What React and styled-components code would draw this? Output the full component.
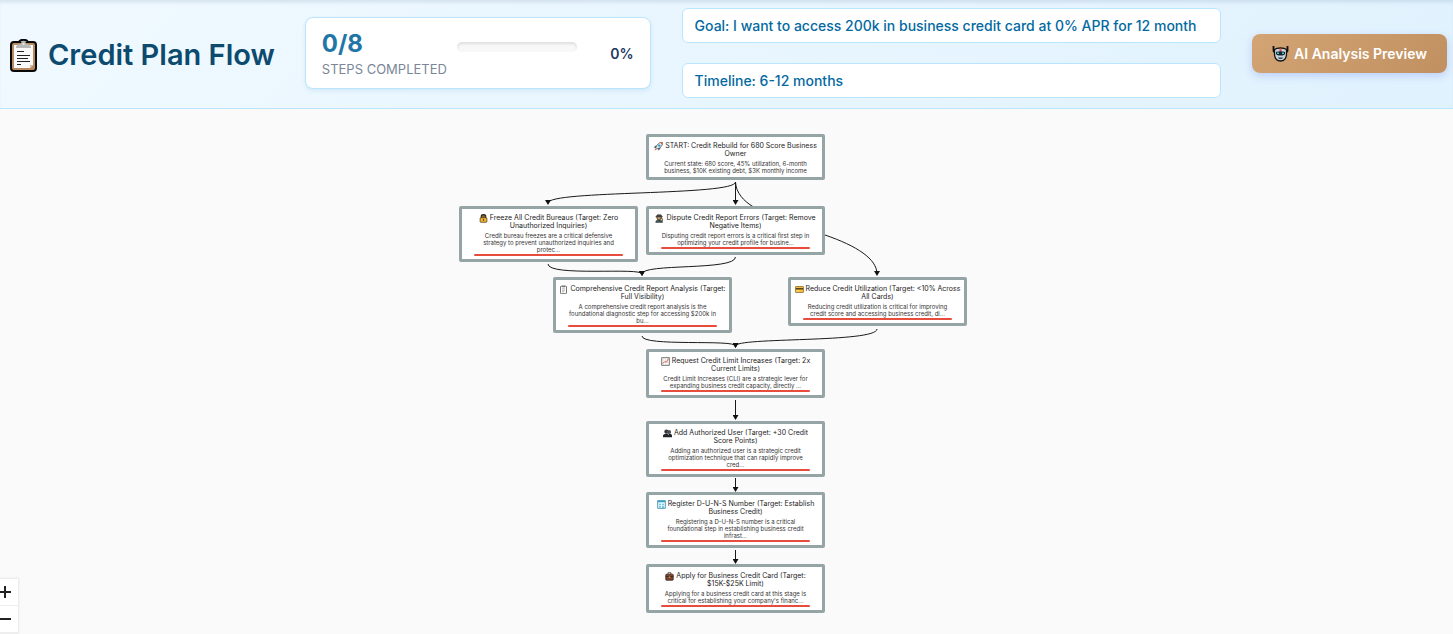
import React from 'react';
import styled, { createGlobalStyle } from 'styled-components';

const GlobalStyle = createGlobalStyle`
    * {
        box-sizing: border-box;
    }
    body {
        margin: 0;
        background: #fafafa;
        font-family: Inter, 'Liberation Sans', sans-serif;
    }
`;

const Page = styled.div`
    display: flex;
    flex-direction: column;
    min-height: 100vh;
    overflow: hidden;
`;

const Header = styled.header`
    display: flex;
    align-items: center;
    padding: 8px 6px 10px 10px;
    background: linear-gradient(135deg, #f0f9ff 0%, #e0f2fe 100%);
    border-bottom: 1px solid #bae6fd;
    box-shadow: inset 0 4px 4px -2px rgba(100, 130, 160, 0.2);
`;

const Title = styled.h1`
    display: flex;
    align-items: center;
    gap: 11px;
    margin: 0 30px 0 0;
    padding-top: 4px;
    color: #0c4a6e;
    font-size: 29px;
    font-weight: 600;
    line-height: 36px;
    white-space: nowrap;
`;

const Progress = styled.section`
    display: flex;
    align-items: center;
    width: 346px;
    height: 72px;
    padding: 0 16px;
    background: white;
    border: 1px solid #bae6fd;
    border-radius: 8px;
    box-shadow: 0 2px 4px rgba(14, 116, 180, 0.1);
`;

const Steps = styled.div`
    display: flex;
    flex-direction: column;
    gap: 2px;
    width: 135px;
`;

const Count = styled.strong`
    color: #2176a8;
    font-size: 24px;
    font-weight: 700;
    line-height: 30px;
`;

const Caption = styled.span`
    color: #7b8698;
    font-size: 13px;
    line-height: 16px;
    text-transform: uppercase;
    white-space: nowrap;
`;

const Track = styled.div`
    width: 120px;
    height: 10px;
    margin-bottom: 12px;
    overflow: hidden;
    background: #f8f8f8;
    border-radius: 5px;
    box-shadow: inset 0 2px 3px rgba(0, 0, 0, 0.1);
`;

const Fill = styled.div`
    height: 100%;
    background: #0284c7;
`;

const Percent = styled.span`
    margin-left: auto;
    color: #1e3a5f;
    font-size: 14px;
    font-weight: 600;
`;

const Facts = styled.div`
    display: flex;
    flex-direction: column;
    gap: 20px;
    width: 540px;
    margin: 0 31px;
`;

const Fact = styled.div`
    padding: 0 12px;
    background: white;
    border: 1px solid #bae6fd;
    border-radius: 6px;
    color: #0369a1;
    font-size: 14px;
    font-weight: 500;
    line-height: 33px;
    white-space: nowrap;
`;

const AnalysisButton = styled.button`
    display: flex;
    align-items: center;
    justify-content: center;
    gap: 5px;
    width: 195px;
    height: 39px;
    margin-left: auto;
    padding: 0;
    border: 0;
    border-radius: 8px;
    background: linear-gradient(135deg, #d4a574 0%, #c09060 100%);
    box-shadow: 0 3px 8px rgba(102, 126, 234, 0.3);
    color: white;
    font-family: inherit;
    font-size: 14px;
    font-weight: 600;
    white-space: nowrap;
`;

const Canvas = styled.main`
    position: relative;
    display: flex;
    flex: 1;
    justify-content: center;
`;

const Stage = styled.div`
    position: relative;
    flex: none;
    width: 559px;
    height: 520px;
`;

const Edges = styled.svg`
    position: absolute;
    inset: 0;
    width: 100%;
    height: 100%;
    fill: none;
    stroke: #1a1a1a;
`;

const Node = styled.article`
    position: absolute;
    left: ${({ $x }) => $x}px;
    top: ${({ $y }) => $y}px;
    display: flex;
    flex-direction: column;
    align-items: center;
    width: 179px;
    padding: 5px 2px 3px;
    background: white;
    border: 3px solid #95a5a6;
    border-radius: 2px;
    text-align: center;
    white-space: pre;
`;

const NodeTitle = styled.h2`
    margin: 0 0 2px;
    color: #222;
    font-size: 7px;
    font-weight: 400;
    line-height: 8px;

    svg {
        margin: 0 2px -1px 0;
        vertical-align: top;
    }
`;

const NodeText = styled.p`
    margin: 0;
    color: #333;
    font-size: 6px;
    line-height: 7px;
`;

const Rule = styled.div`
    width: 149px;
    height: 2px;
    margin-top: 1px;
    background: #e74c3c;
    border-radius: 1px;
`;

const Zoom = styled.div`
    position: absolute;
    bottom: 1px;
    left: -8px;
    display: flex;
    flex-direction: column;
    background: white;
    box-shadow: 0 0 2px 1px rgba(0, 0, 0, 0.08);
`;

const ZoomButton = styled.button`
    display: flex;
    align-items: center;
    justify-content: center;
    width: 26px;
    height: 27px;
    padding: 0;
    background: white;
    border: 0;
    border-bottom: 1px solid #eee;
`;

const ClipboardIcon = () => (
    <svg width="27" height="33" viewBox="0 0 27 33" aria-hidden="true">
        <rect x="1" y="3" width="25" height="29" rx="3" fill="#b98b62" stroke="#090909" strokeWidth="2" />
        <path d="M9 3c1-3 8-3 9 0" fill="#b9b9b9" stroke="#090909" strokeWidth="2" />
        <path d="M4 6h19v20l-3 3H4z" fill="#fafafa" />
        <path d="M20 29v-3h3" fill="#d9b996" />
        <path d="M6 9c0-3 2-4 5-4 0-4 5-4 5 0 3 0 5 1 5 4z" fill="#b9b9b9" />
        <circle cx="13.5" cy="5" r="1" fill="#eee" />
        <path d="M7 12.5h7M7 16.5h13M7 19.5h11M7 22.500h13M7 25.500h4" stroke="#222" />
    </svg>
);

const RobotIcon = () => (
    <svg width="17" height="17" viewBox="0 0 17 17" aria-hidden="true">
        <path d="M1.500 1v5L4 9M15.500 1v5L13 9" fill="none" stroke="#111" strokeWidth="1.800" />
        <path d="M2.500 4.500C5 2.500 12 2.500 14.500 4.500V10c-.5 4-3 6-6 6s-5.500-2-6-6z" fill="#c5d3da" stroke="#111" strokeWidth="1.300" />
        <path d="M7.500 3.500h2v3h-2z" fill="#e74c3c" />
        <path d="M4 7c3-1 6-1 9 0v2c-1 2-8 2-9 0z" fill="#17262e" />
        <path d="M5 7.500h2V9H5zM10 7.500h2V9h-2z" fill="#4cc5d9" />
        <path d="M6 12.500h5L10 14H7z" fill="#37474f" />
    </svg>
);

const nodeIcons = {
    rocket: (
        <>
            <path d="m3 5-2 1v2l3-1M6 8v3l2-2V7" fill="#3b88a8" stroke="#24343c" strokeWidth=".6" />
            <path d="M4 9 2.500 7.500 4 4l4-3.500h3V4L8 8z" fill="#dfe9ee" stroke="#333" strokeWidth=".8" />
            <path d="M8 .5h3.500V4zM2.500 8 .5 11.500 4 9.500z" fill="#e2523e" />
            <circle cx="7" cy="4.800" r="1.600" fill="#2c9bc4" />
        </>
    ),
    lock: (
        <>
            <path d="M3 6V3c0-3 6-3 6 0v3" fill="#8d6b22" stroke="#222" strokeWidth="1.500" />
            <rect x="1.500" y="5" width="9" height="6" rx="1" fill="#f6b932" stroke="#4b3514" />
            <circle cx="6" cy="8" r="1" fill="#222" />
        </>
    ),
    detective: (
        <>
            <path d="M1 11c0-4 9-4 9 0z" fill="#416a70" stroke="#222" />
            <circle cx="5.500" cy="5" r="3" fill="#d69b63" stroke="#222" />
            <path d="M1 4h9L8 1H3z" fill="#4e493f" stroke="#222" strokeWidth=".6" />
            <circle cx="8.500" cy="7.500" r="1.700" fill="#e6d692" stroke="#222" />
        </>
    ),
    clipboard: (
        <>
            <rect x="2" y="1.500" width="8" height="10" rx="1" fill="#fff" stroke="#444" />
            <path d="M4 1h4v2H4z" fill="#777" />
            <path d="M4 5h4M4 7h4M4 9h3" stroke="#777" strokeWidth=".7" />
        </>
    ),
    card: (
        <>
            <rect x=".5" y="2" width="11" height="8" rx="1" fill="#f4bd35" stroke="#604720" strokeWidth=".8" />
            <path d="M1 4h10v2H1z" fill="#5a421b" />
            <path d="M2 8h4" stroke="#fff0a0" />
        </>
    ),
    chart: (
        <>
            <rect x="1" y="1" width="10" height="10" fill="#fff" stroke="#444" />
            <path d="M3 1v10M6 1v10M9 1v10M1 4h10M1 7h10" stroke="#ccc" strokeWidth=".5" />
            <path d="m2 9 3-3 2 1 3-5" fill="none" stroke="#d63b34" />
        </>
    ),
    users: (
        <>
            <circle cx="4.500" cy="3.500" r="2.800" fill="#34383d" />
            <circle cx="8" cy="4" r="2.800" fill="#4a5055" />
            <path d="M0 11V9c0-3 7-4 7-1 1-3 5-2 5 1v2z" fill="#202328" />
        </>
    ),
    building: (
        <>
            <rect x="1" y="1" width="10" height="10" fill="#e9faff" stroke="#237da0" />
            <path d="M1 2h10" stroke="#329fc5" strokeWidth="2" />
            <path d="M3 5h2v2H3zM7 5h2v2H7zM3 8h2v2H3zM7 8h2v3H7z" fill="#53b6d5" />
        </>
    ),
    briefcase: (
        <>
            <path d="M4 3V1h4v2" fill="none" stroke="#35211a" />
            <rect x="1" y="3" width="10" height="8" rx="1" fill="#7c452d" stroke="#35211a" />
            <path d="M1 6h10" stroke="#35211a" />
            <path d="M5 6h2v1.500H5z" fill="#eabb52" />
        </>
    ),
};

const nodes = [
    { x: 199, y: 25, icon: 'rocket', title: 'START: Credit Rebuild for 680 Score Business\nOwner', text: 'Current state: 680 score, 45% utilization, 6-month\nbusiness, $10K existing debt, $3K monthly income', start: true },
    { x: 12, y: 97, icon: 'lock', title: 'Freeze All Credit Bureaus (Target: Zero\nUnauthorized Inquiries)', text: 'Credit bureau freezes are a critical defensive\nstrategy to prevent unauthorized inquiries and\nprotec...' },
    { x: 199, y: 97, icon: 'detective', title: 'Dispute Credit Report Errors (Target: Remove\nNegative Items)', text: 'Disputing credit report errors is a critical first step in\noptimizing your credit profile for busine...' },
    { x: 106, y: 168, icon: 'clipboard', title: 'Comprehensive Credit Report Analysis (Target:\nFull Visibility)', text: 'A comprehensive credit report analysis is the\nfoundational diagnostic step for accessing $200k in\nbu...' },
    { x: 341, y: 168, icon: 'card', title: 'Reduce Credit Utilization (Target: <10% Across\nAll Cards)', text: 'Reducing credit utilization is critical for improving\ncredit score and accessing business credit, di...' },
    { x: 199, y: 240, icon: 'chart', title: 'Request Credit Limit Increases (Target: 2x\nCurrent Limits)', text: 'Credit Limit Increases (CLI) are a strategic lever for\nexpanding business credit capacity, directly ...' },
    { x: 199, y: 312, icon: 'users', title: 'Add Authorized User (Target: +30 Credit\nScore Points)', text: 'Adding an authorized user is a strategic credit\noptimization technique that can rapidly improve\ncred...' },
    { x: 199, y: 383, icon: 'building', title: 'Register D-U-N-S Number (Target: Establish\nBusiness Credit)', text: 'Registering a D-U-N-S number is a critical\nfoundational step in establishing business credit\ninfrast...' },
    { x: 199, y: 455, icon: 'briefcase', title: 'Apply for Business Credit Card (Target:\n$15K-$25K Limit)', text: "Applying for a business credit card at this stage is\ncritical for establishing your company's financ..." },
];

const edges = [
    'M288.500 73C288.500 87 101 81 101 94',
    'M288.500 73V94',
    'M288.500 73C289 84 297 92 305 97C325 110 352 117 378 126C410 137 430 150 430 165',
    'M101 155C101 168 195 158 195 165',
    'M288.500 148C288.500 162 195 154 195 165',
    'M195 227C195 238 288.500 230 288.500 237',
    'M430 220C430 234 288.500 228 288.500 237',
    'M288.500 291V309',
    'M288.500 369V381',
    'M288.500 441V453',
];

const App = () => {
    const completed = 0;

    return (
        <>
            <GlobalStyle />
            <Page>
                <Header>
                    <Title>
                        <ClipboardIcon />
                        Credit Plan Flow
                    </Title>
                    <Progress>
                        <Steps>
                            <Count>{completed}/8</Count>
                            <Caption>Steps completed</Caption>
                        </Steps>
                        <Track>
                            <Fill style={{ width: `${(completed / 8) * 100}%` }} />
                        </Track>
                        <Percent>{(completed / 8) * 100}%</Percent>
                    </Progress>
                    <Facts>
                        <Fact>Goal: I want to access 200k in business credit card at 0% APR for 12 month</Fact>
                        <Fact>Timeline: 6-12 months</Fact>
                    </Facts>
                    <AnalysisButton type="button">
                        <RobotIcon />
                        AI Analysis Preview
                    </AnalysisButton>
                </Header>
                <Canvas>
                    <Stage>
                        <Edges>
                            <defs>
                                <marker id="arrow" markerWidth="5" markerHeight="6" refX="3" refY="3" orient="90" markerUnits="userSpaceOnUse">
                                    <path d="M0 0 5 3 0 6z" fill="#111" stroke="none" />
                                </marker>
                            </defs>
                            {edges.map((d) => (
                                <path key={d} d={d} markerEnd="url(#arrow)" />
                            ))}
                        </Edges>
                        {nodes.map((node) => (
                            <Node key={node.icon} $x={node.x} $y={node.y}>
                                <NodeTitle>
                                    <svg width="9" height="9" viewBox="0 0 12 12" aria-hidden="true">{nodeIcons[node.icon]}</svg>
                                    {node.title}
                                </NodeTitle>
                                <NodeText>{node.text}</NodeText>
                                {!node.start && <Rule />}
                            </Node>
                        ))}
                    </Stage>
                    <Zoom>
                        <ZoomButton type="button" aria-label="Zoom in">
                            <svg width="14" height="14" viewBox="0 0 14 14"><path d="M1 7h12M7 1v12" stroke="#222" strokeWidth="2" /></svg>
                        </ZoomButton>
                        <ZoomButton type="button" aria-label="Zoom out">
                            <svg width="14" height="14" viewBox="0 0 14 14"><path d="M1 7h12" stroke="#222" strokeWidth="2" /></svg>
                        </ZoomButton>
                    </Zoom>
                </Canvas>
            </Page>
        </>
    );
};

export default App;
